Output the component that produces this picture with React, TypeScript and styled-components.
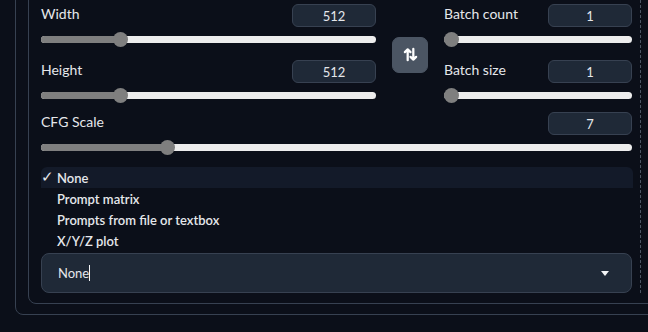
import React from "react";
import styled, { createGlobalStyle } from "styled-components";

const GlobalStyle = createGlobalStyle`
  html, body {
    margin: 0;
    padding: 0;
    background: #0b0f19;
    overflow: hidden;
  }
  body {
    font-family: Lato, "Liberation Sans", sans-serif;
    color: #e5e7eb;
  }
`;

const OuterPanel = styled.div`
  margin: -26px 0 0 15px;
  width: 700px;
  border: 1px solid #374151;
  border-radius: 8px;
  padding: 12px 0 10px 12px;
`;

const InnerPanel = styled.div`
  border: 1px solid #374151;
  border-radius: 8px;
  padding: 12px 0 10px 12px;
`;

const Column = styled.div`
  width: 600px;
  box-sizing: border-box;
  padding: 4px 8px 0 0;
  border-right: 1px dashed #4b5563;
`;

const TopGrid = styled.div`
  display: grid;
  grid-template-columns: 1fr 36px 188px;
  grid-template-rows: auto auto;
  column-gap: 16px;
  row-gap: 13px;
`;

const SwapCell = styled.div`
  grid-column: 2;
  grid-row: 1 / span 2;
  display: flex;
  align-items: center;
`;

const SwapButton = styled.button`
  width: 36px;
  height: 36px;
  border: 1px solid #4b5563;
  border-radius: 7px;
  background: #4b5563;
  display: flex;
  align-items: center;
  justify-content: center;
  padding: 0;
  margin-top: 2px;
`;

const Field = styled.div<{ $col: number; $row: number }>`
  grid-column: ${({ $col }) => $col};
  grid-row: ${({ $row }) => $row};
  display: flex;
  flex-direction: column;
`;

const CfgField = styled.div`
  margin-top: 9px;
  display: flex;
  flex-direction: column;
`;

const FieldHead = styled.div`
  display: flex;
  justify-content: space-between;
  align-items: flex-start;
  height: 23px;
`;

const Label = styled.span`
  font-size: 14px;
  line-height: 18px;
  margin-top: 1px;
  color: #e5e7eb;
`;

const NumberBox = styled.div`
  width: 84px;
  height: 23px;
  box-sizing: border-box;
  background: #1f2937;
  border: 1px solid #374151;
  border-radius: 6px;
  font-size: 13px;
  display: flex;
  align-items: center;
  justify-content: center;
  color: #e5e7eb;
`;

const SliderWrap = styled.div`
  position: relative;
  height: 16px;
  margin-top: 4px;
  display: flex;
  align-items: center;
`;

const Track = styled.div`
  position: relative;
  width: 100%;
  height: 7px;
  border-radius: 4px;
  background: #ededed;
`;

const Fill = styled.div`
  position: absolute;
  left: 0;
  top: 0;
  bottom: 0;
  border-radius: 4px 0 0 4px;
  background: #7f7f7f;
`;

const Thumb = styled.div`
  position: absolute;
  top: 50%;
  width: 15px;
  height: 15px;
  margin: -7.5px 0 0 -7.5px;
  border-radius: 50%;
  background: #7f7f7f;
`;

const List = styled.ul`
  list-style: none;
  margin: 12px 0 2px;
  padding: 0;
`;

const Item = styled.li<{ $selected?: boolean }>`
  position: relative;
  height: 21px;
  display: flex;
  align-items: center;
  padding-left: 16px;
  font-size: 13px;
  font-weight: 600;
  color: #e5e7eb;
  border-radius: ${({ $selected }) => ($selected ? "6px 6px 0 0" : "0")};
  background: ${({ $selected }) => ($selected ? "#131a29" : "transparent")};
  margin-right: -1px;
`;

const Check = styled.span`
  position: absolute;
  left: 0;
  top: 0;
  font-size: 15px;
  font-weight: 400;
`;

const SelectBox = styled.div`
  height: 40px;
  box-sizing: border-box;
  border: 1px solid #374151;
  border-radius: 8px;
  background: #1f2937;
  display: flex;
  align-items: center;
  justify-content: space-between;
  padding: 0 22px 0 16px;
  font-size: 13px;
  color: #e5e7eb;
`;

const SelectText = styled.span`
  display: flex;
  align-items: center;
`;

const Caret = styled.span`
  display: inline-block;
  width: 1px;
  height: 16px;
  background: #f3f4f6;
`;

const Arrow = styled.span`
  width: 0;
  height: 0;
  border-left: 4px solid transparent;
  border-right: 4px solid transparent;
  border-top: 5px solid #f3f4f6;
  margin-top: 1px;
`;

function Slider({ value, min, max }: { value: number; min: number; max: number }) {
  const pct = (value - min) / (max - min);
  const pos = `calc(7.5px + (100% - 15px) * ${pct})`;
  return (
    <SliderWrap>
      <Track>
        <Fill style={{ width: pos }} />
        <Thumb style={{ left: pos }} />
      </Track>
    </SliderWrap>
  );
}

function NumField({
  label, value, min, max, col, row,
}: { label: string; value: number; min: number; max: number; col: number; row: number }) {
  return (
    <Field $col={col} $row={row}>
      <FieldHead>
        <Label>{label}</Label>
        <NumberBox>{value}</NumberBox>
      </FieldHead>
      <Slider value={value} min={min} max={max} />
    </Field>
  );
}

const scripts = ["None", "Prompt matrix", "Prompts from file or textbox", "X/Y/Z plot"];

export default function App() {
  return (
    <>
      <GlobalStyle />
      <OuterPanel>
        <InnerPanel>
          <Column>
            <TopGrid>
              <NumField label="Width" value={512} min={64} max={2048} col={1} row={1} />
              <NumField label="Height" value={512} min={64} max={2048} col={1} row={2} />
              <SwapCell>
                <SwapButton>
                  <svg width="15" height="15" viewBox="0 0 16 16" fill="none" stroke="#ffffff" strokeWidth="2.4" strokeLinecap="round" strokeLinejoin="round">
                    <path d="M5 14V2.5M2 5.5l3-3 3 3" />
                    <path d="M11 2v11.5M8 10.5l3 3 3-3" />
                  </svg>
                </SwapButton>
              </SwapCell>
              <NumField label="Batch count" value={1} min={1} max={100} col={3} row={1} />
              <NumField label="Batch size" value={1} min={1} max={8} col={3} row={2} />
            </TopGrid>
            <CfgField>
              <FieldHead>
                <Label>CFG Scale</Label>
                <NumberBox>7</NumberBox>
              </FieldHead>
              <Slider value={7} min={1} max={30} />
            </CfgField>
            <List>
              {scripts.map((s, i) => (
                <Item key={s} $selected={i === 0}>
                  {i === 0 && <Check>✓</Check>}
                  {s}
                </Item>
              ))}
            </List>
            <SelectBox>
              <SelectText>
                None
                <Caret />
              </SelectText>
              <Arrow />
            </SelectBox>
          </Column>
        </InnerPanel>
      </OuterPanel>
    </>
  );
}
